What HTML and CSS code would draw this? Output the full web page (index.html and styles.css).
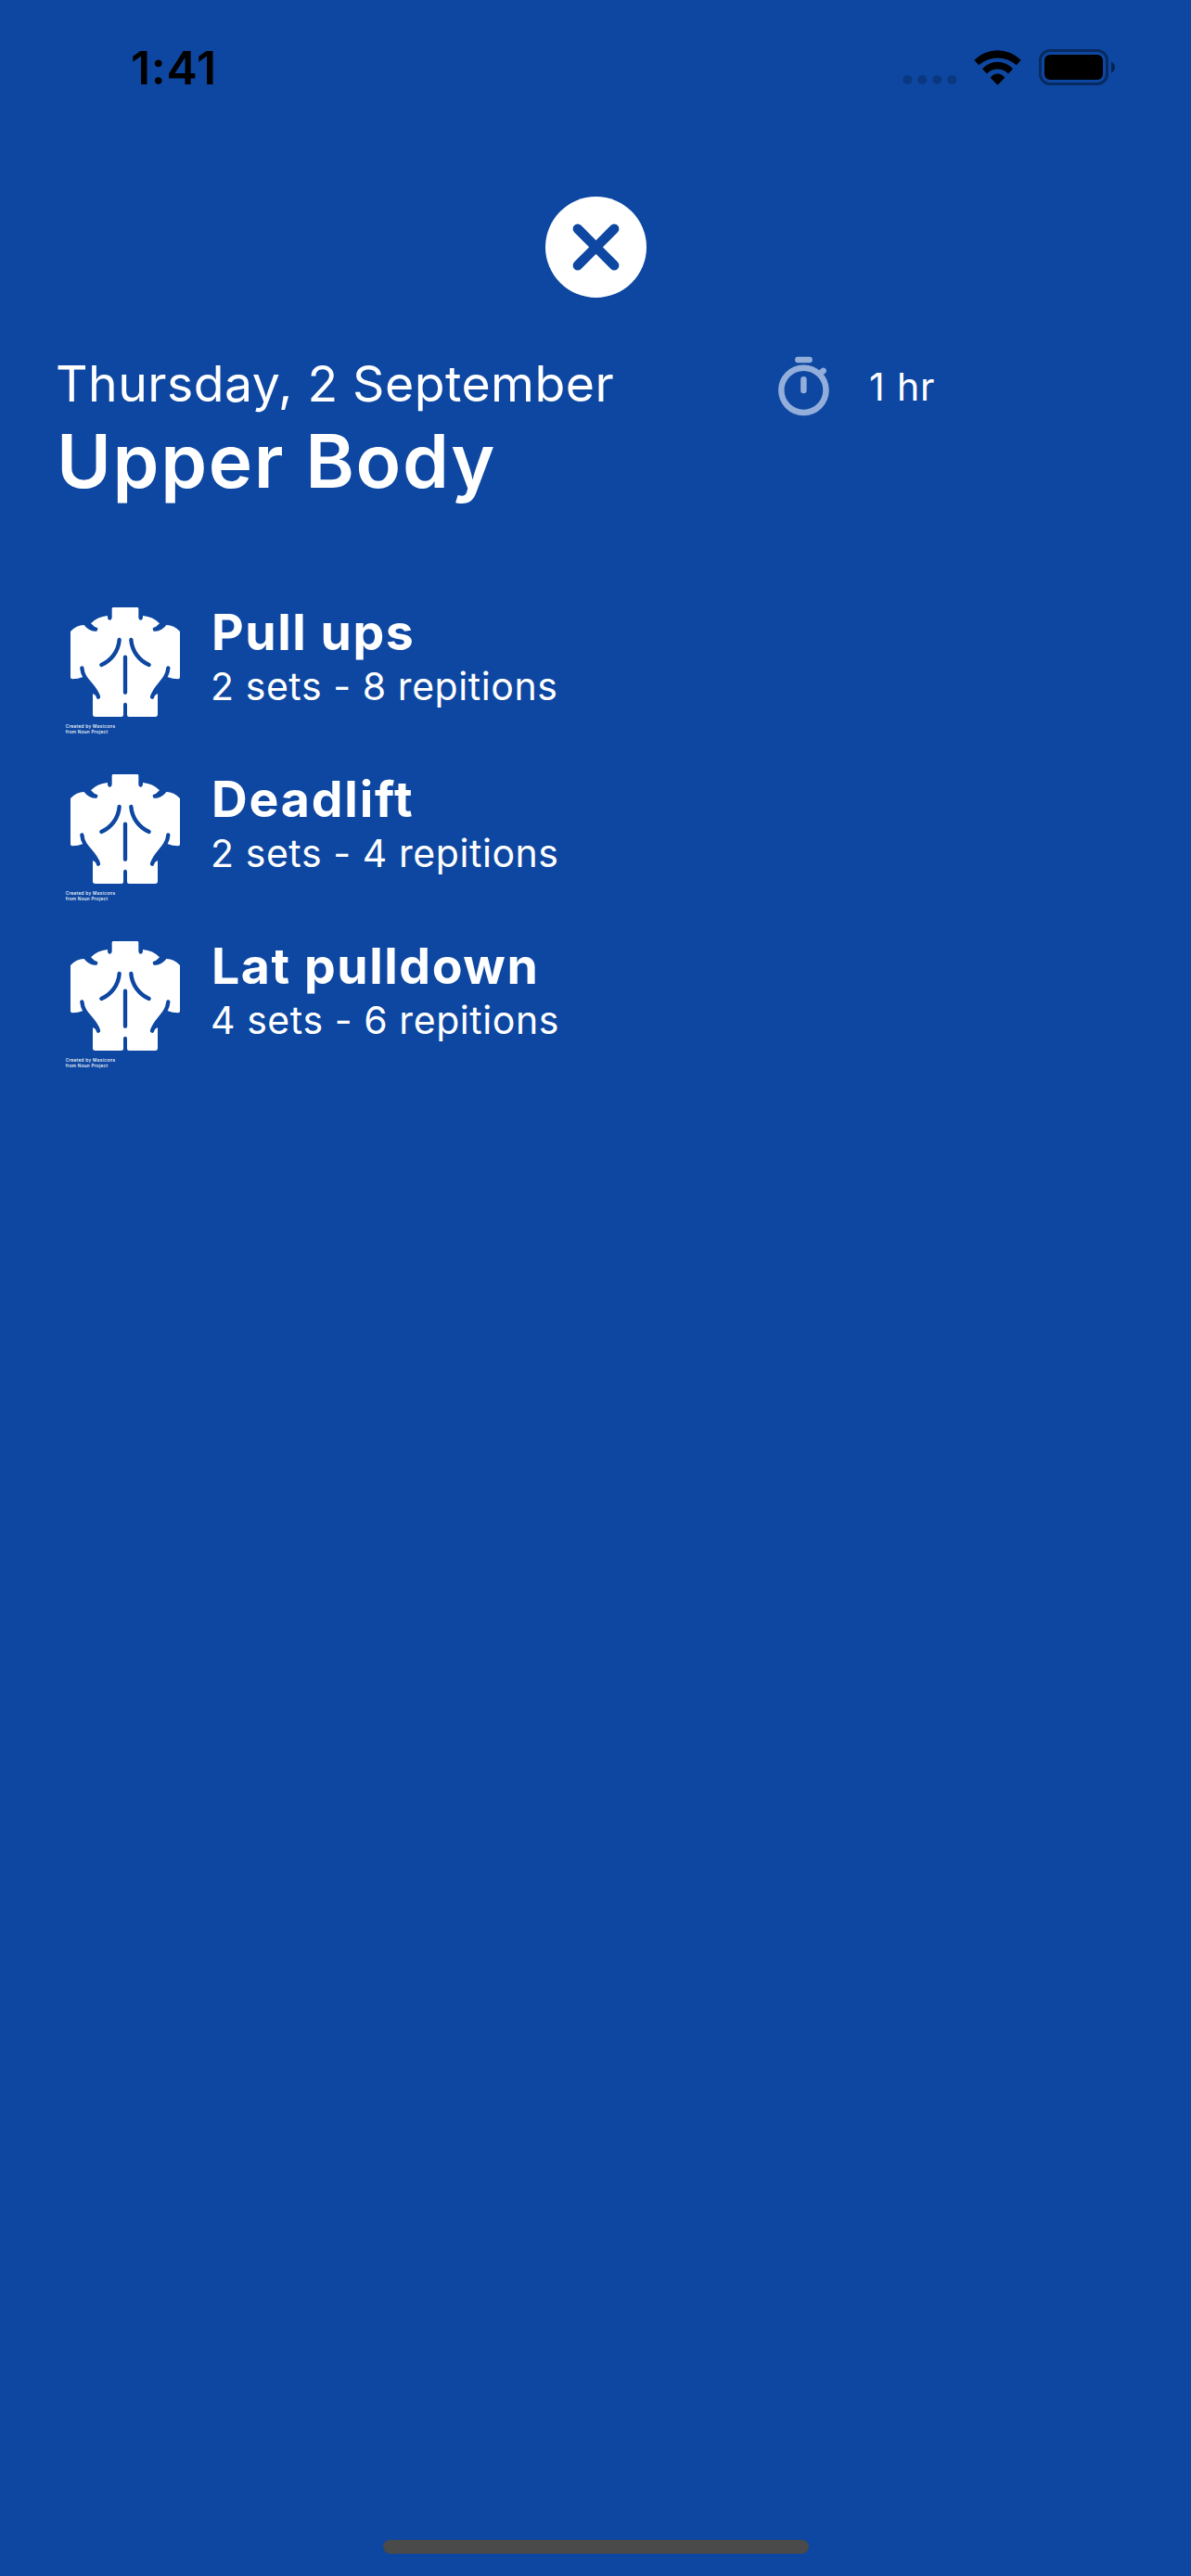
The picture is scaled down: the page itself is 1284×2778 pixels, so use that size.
FILE: index.html
```
<!DOCTYPE html>
<html lang="en">
<head>
<meta charset="utf-8">
<title>Upper Body</title>
<link rel="stylesheet" href="styles.css">
</head>
<body>
<svg width="0" height="0" class="defs" aria-hidden="true">
  <symbol id="back" viewBox="0 0 450 450">
    <path fill="#fff" d="M187 30H264Q268 30 268 34V62Q269 71 275 71Q281 71 282 62V57Q315 60 336 82Q325 95 313 98L320 107L347 88Q378 82 402 108V256Q402 262 396 262Q378 262 361 255C350 278 322 284 312 320L330 309V376Q330 384 322 384H237Q231 384 231 377V344Q230 338 225 338Q220 338 219 344V377Q219 384 213 384H128Q120 384 120 376V309L138 320C128 284 100 278 89 255Q72 262 54 262Q48 262 48 256V108Q72 82 103 88L130 107L137 98Q125 95 114 82Q135 60 168 57V62Q169 71 175 71Q181 71 182 62V34Q182 30 187 30Z"/>
    <g fill="none" stroke="#0d47a1" stroke-width="13" stroke-linecap="round">
      <path d="M98 84Q112 101 129 101M352 84Q338 101 321 101"/>
      <path d="M206 135C203 172 180 202 148 216M244 135C247 172 270 202 302 216"/>
      <path d="M85 226C88 268 128 282 138 320M364 226C361 268 322 282 312 320"/>
      <path d="M225 191V305"/>
    </g>
  </symbol>
</svg>

<header class="status">
  <span class="clock">1:41</span>
  <svg class="signal" width="59" height="10" viewBox="0 0 59 10"><g fill-opacity=".2"><circle cx="5.3" cy="5" r="5"/><circle cx="21.3" cy="5" r="5"/><circle cx="37.3" cy="5" r="5"/><circle cx="53.3" cy="5" r="5"/></g></svg>
  <svg class="wifi" width="51" height="38" viewBox="1050 53.5 51 38"><path d="M1050.3 64.3A35.3 35.3 0 0 1 1100.7 64.3L1095.7 69.7A30.3 30.3 0 0 0 1055.3 69.7ZM1059 73.7A22.1 22.1 0 0 1 1092 73.7L1087 79A15.7 15.7 0 0 0 1064 79ZM1067.7 83.3A9.2 9.2 0 0 1 1083.3 83.3L1075.5 91.2Z"/></svg>
  <svg class="battery" width="83" height="40" viewBox="1120 53 83 40"><rect x="1121.5" y="54.5" width="72" height="36" rx="10.5" fill="none" stroke="#000" stroke-opacity=".4" stroke-width="3"/><rect x="1126" y="59" width="63" height="27" rx="6"/><path d="M1198 66.5Q1202 68.5 1202 72.5T1198 78.5Z" fill-opacity=".5"/></svg>
</header>

<main>
  <button class="close" aria-label="Close">
    <svg width="109" height="109" viewBox="0 0 109 109"><circle cx="54.5" cy="54.5" r="54.5" fill="#fff"/><path d="M34.8 34.8L74.2 74.2M74.2 34.8L34.8 74.2" stroke="#0d47a1" stroke-width="10.4" stroke-linecap="round"/></svg>
  </button>

  <section class="summary">
    <div class="heading">
      <p class="date">Thursday, 2 September</p>
      <h1>Upper Body</h1>
    </div>
    <div class="duration">
      <svg width="60" height="66" viewBox="836 384 60 66" fill="none" stroke="#93aeda" stroke-width="6.5" stroke-linecap="round"><circle cx="866.4" cy="420.8" r="24.1"/><path d="M860.3 387.9H872.6M866.4 409.3V421M885 402L887.6 399.9"/></svg>
      <span>1 hr</span>
    </div>
  </section>

  <ul class="exercises">
    <li>
      <svg width="150" height="150" viewBox="0 0 450 450"><use href="#back"/><text class="credit" x="32" y="421" textLength="160">Created by Maxicons</text><text class="credit" x="32" y="438" textLength="136">from Noun Project</text></svg>
      <div><h2>Pull ups</h2><p>2 sets - 8 repitions</p></div>
    </li>
    <li>
      <svg width="150" height="150" viewBox="0 0 450 450"><use href="#back"/><text class="credit" x="32" y="421" textLength="160">Created by Maxicons</text><text class="credit" x="32" y="438" textLength="136">from Noun Project</text></svg>
      <div><h2 class="wide">Deadlift</h2><p>2 sets - 4 repitions</p></div>
    </li>
    <li>
      <svg width="150" height="150" viewBox="0 0 450 450"><use href="#back"/><text class="credit" x="32" y="421" textLength="160">Created by Maxicons</text><text class="credit" x="32" y="438" textLength="136">from Noun Project</text></svg>
      <div><h2>Lat pulldown</h2><p>4 sets - 6 repitions</p></div>
    </li>
  </ul>
</main>

<div class="home-indicator"></div>
</body>
</html>
```
FILE: styles.css
```
* { box-sizing: border-box; }

body {
  margin: 0;
  height: 2778px;
  display: flex;
  flex-direction: column;
  background: #0d47a1;
  color: #fff;
  font-family: Inter, sans-serif;
  overflow: hidden;
}

svg { display: block; flex: none; }
.defs { height: 0; }
h1, h2, p, ul { margin: 0; padding: 0; }

.status {
  display: flex;
  align-items: center;
  height: 146px;
  padding: 0 81px 0 141px;
  color: #000;
}
.clock { font-size: 50px; font-weight: 600; letter-spacing: .73px; margin-right: auto; }
.signal { margin: 26px 18px 0 0; }
.wifi { margin-right: 19px; }

main { flex: 1; padding-top: 66px; }

.close {
  display: block;
  margin: 0 auto;
  padding: 0;
  border: 0;
  background: none;
}

.summary { display: flex; margin-top: 59px; padding-left: 60px; }
.heading { width: 776px; }
.date { font-size: 53.6px; line-height: 68px; letter-spacing: .46px; }
h1 { font-size: 80px; line-height: 98px; font-weight: 620; letter-spacing: 1.7px; padding-left: 1px; }

.duration {
  display: flex;
  align-items: center;
  gap: 41px;
  height: 74px;
  font-size: 41px;
  letter-spacing: .85px;
}

.exercises {
  display: flex;
  flex-direction: column;
  gap: 30px;
  margin-top: 99px;
  padding-left: 60px;
  list-style: none;
}
.exercises li { display: flex; gap: 17px; }
.exercises li > div { padding-top: 5px; }
h2 { font-size: 53.6px; line-height: 64px; font-weight: 700; letter-spacing: 1.55px; padding-left: 1px; }
.wide { letter-spacing: 1.81px; }
.exercises p { font-size: 41px; line-height: 52px; letter-spacing: .57px; }
.credit { font: 500 14px Inter, sans-serif; fill: #fff; }

.home-indicator {
  width: 459px;
  height: 15px;
  margin: 0 auto 24px;
  border-radius: 8px;
  background: #4a4a4a;
}
```
